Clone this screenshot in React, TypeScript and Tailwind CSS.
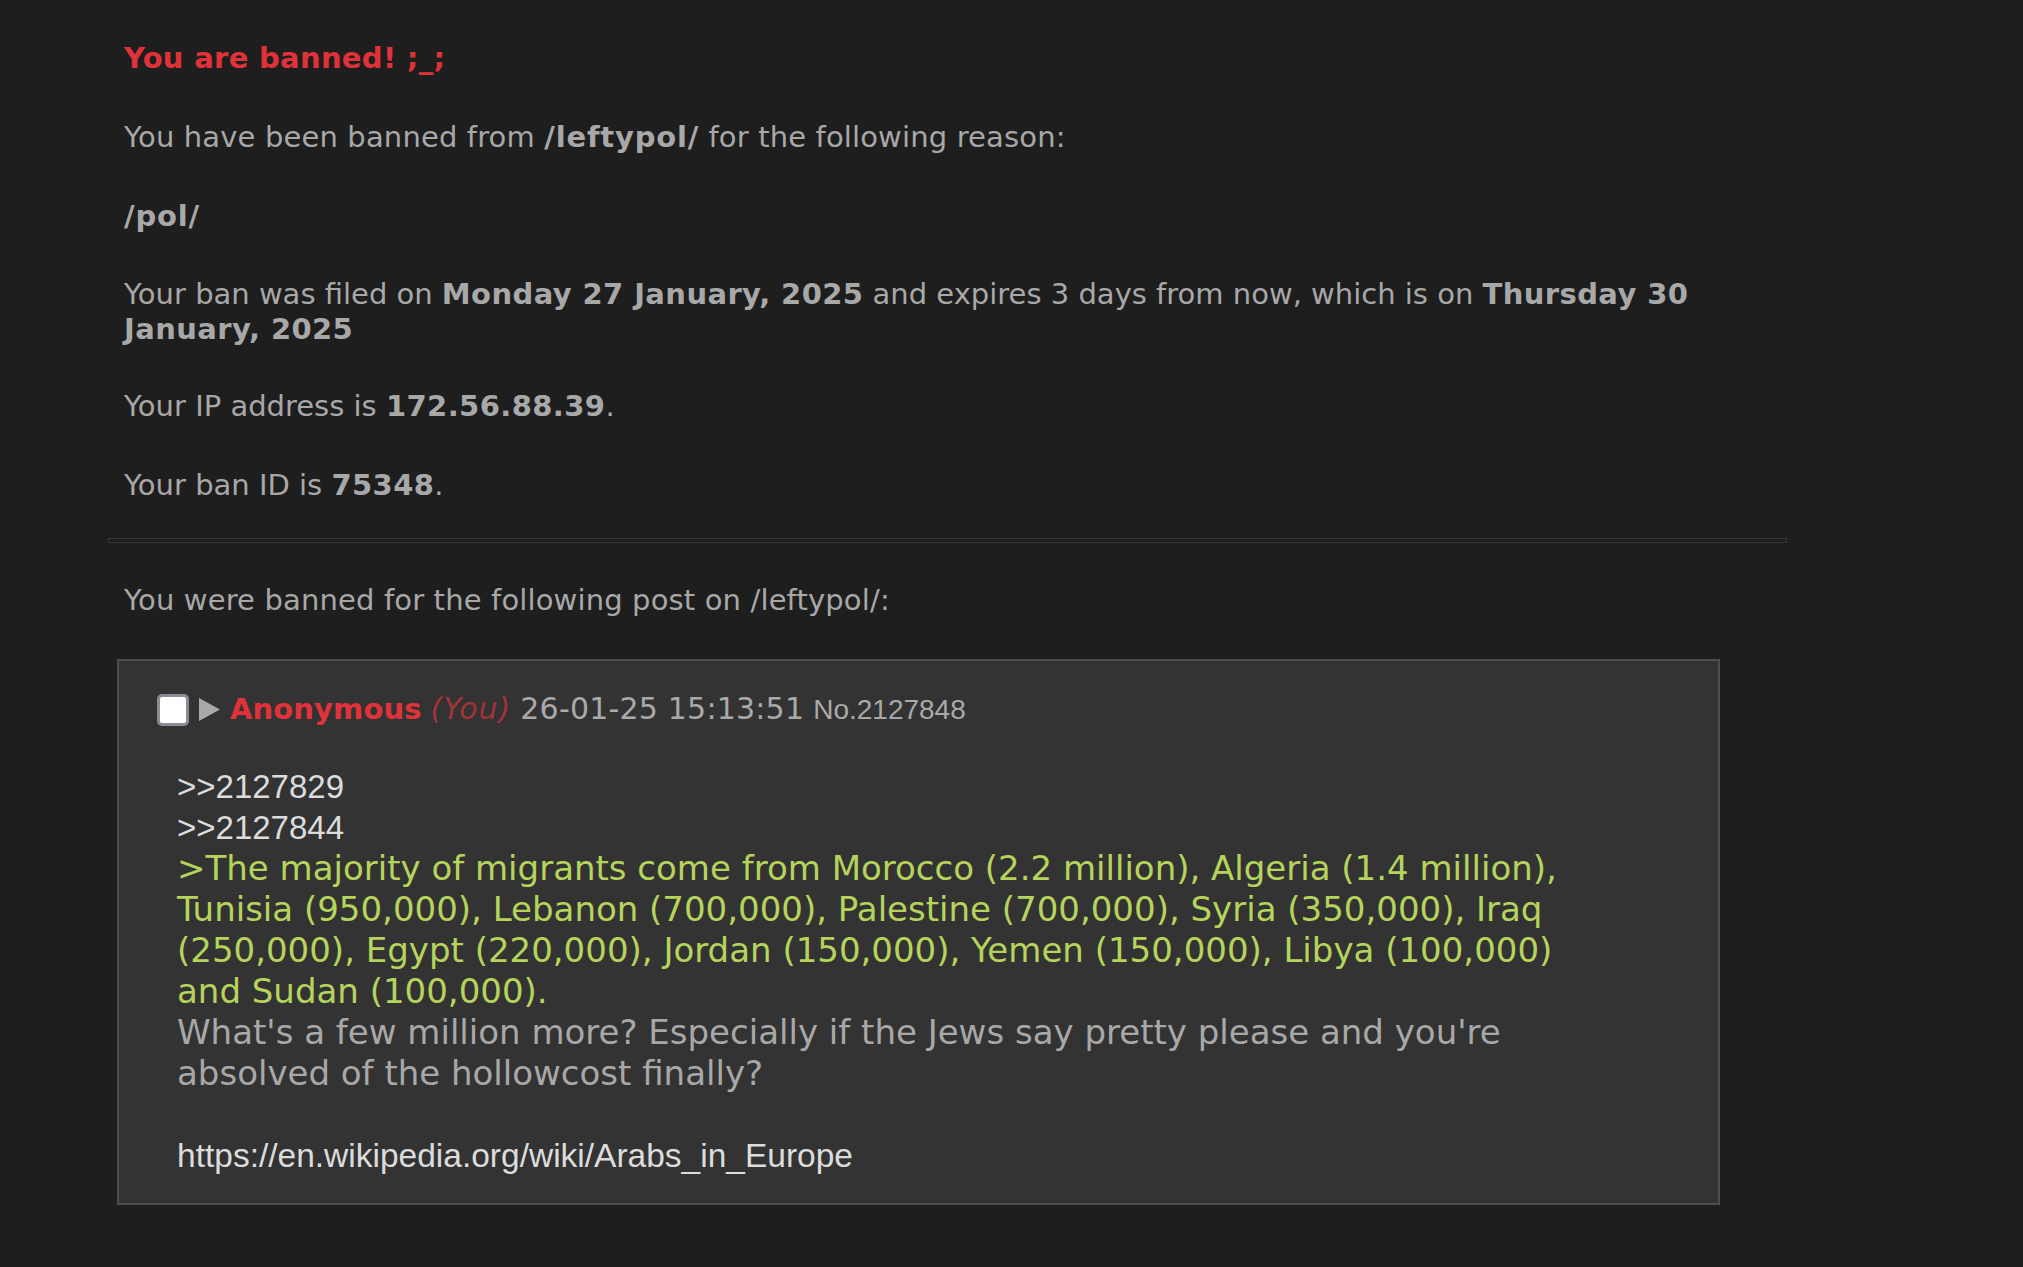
const Checkbox = () => (
  <span className="inline-block w-[32px] h-[32px] rounded-[5px] border-[3px] border-[#8b8b96] bg-white shrink-0"></span>
);

const Arrow = () => (
  <svg width="23" height="25" viewBox="0 0 23 25" className="shrink-0">
    <polygon points="1,1 22,12.5 1,24" fill="#a9a9a9" />
  </svg>
);

const App = () => {
  return (
    <div className="min-h-screen w-full bg-[#1e1e1e] font-['DejaVu_Sans',sans-serif] text-[#a8a8a8]">
      <div className="pl-[108px] pt-[41px] w-[1787px]">
        <div className="px-[16px] text-[29px] leading-[35px]">
          <h2 className="font-bold tracking-[0.3px] text-[#e0323a]">You are banned! ;_;</h2>
          <p className="mt-[44px] tracking-[0.15px]">
            You have been banned from <b className="tracking-[0.8px]">/leftypol/</b> for the following reason:
          </p>
          <p className="mt-[44px] font-bold tracking-[0.8px]">/pol/</p>
          <p className="mt-[43px]">
            Your ban was filed on <b className="tracking-[0.4px]">Monday 27 January, 2025</b> and expires 3 days from
            now, which is on <b className="tracking-[0.4px]">Thursday 30 January, 2025</b>
          </p>
          <p className="mt-[42px]">
            Your IP address is <b className="tracking-[0.4px]">172.56.88.39</b>.
          </p>
          <p className="mt-[44px]">
            Your ban ID is <b className="tracking-[0.4px]">75348</b>.
          </p>
        </div>

        <div className="mt-[35px] h-[5px] border border-[#363636]"></div>

        <p className="mt-[40px] px-[16px] text-[29px] leading-[35px] tracking-[0.15px]">
          You were banned for the following post on /leftypol/:
        </p>

        <div className="mt-[41px] ml-[9px] w-[1603px] bg-[#333333] border-2 border-[#4e4e4e] pl-[38px] pt-[30px] pb-[27px]">
          <div className="flex items-center gap-[9px] leading-[36px]">
            <Checkbox />
            <Arrow />
            <span className="flex items-baseline gap-[9px]">
              <span className="text-[29px] font-bold tracking-[0.1px] text-[#e0323a]">Anonymous</span>
              <span className="text-[30px] italic tracking-[1px] text-[#a3333a]">(You)</span>
              <span className="text-[30px] tracking-[0.2px] text-[#a9a9a9]">26-01-25 15:13:51</span>
              <span className="text-[28px] font-['Liberation_Sans',Arial,sans-serif] text-[#a9a9a9]">No.2127848</span>
            </span>
          </div>

          <div className="mt-[38px] ml-[20px] w-[1420px] text-[34px] leading-[41px]">
            <div className="text-[33px] font-['Liberation_Sans',Arial,sans-serif] text-[#dcdcdc]">&gt;&gt;2127829</div>
            <div className="text-[33px] font-['Liberation_Sans',Arial,sans-serif] text-[#dcdcdc]">&gt;&gt;2127844</div>
            <div className="text-[#b6d45c]">
              &gt;The majority of migrants come from Morocco (2.2 million), Algeria (1.4 million), Tunisia (950,000), Lebanon
              (700,000), Palestine (700,000), Syria (350,000), Iraq (250,000), Egypt (220,000), Jordan (150,000), Yemen
              (150,000), Libya (100,000) and Sudan (100,000).
            </div>
            <div className="text-[#a8a8a8]">
              What's a few million more? Especially if the Jews say pretty please and you're absolved of the hollowcost
              finally?
            </div>
            <div className="h-[41px]"></div>
            <div className="text-[33.5px] font-['Liberation_Sans',Arial,sans-serif] text-[#dcdcdc]">
              https://en.wikipedia.org/wiki/Arabs_in_Europe
            </div>
          </div>
        </div>
      </div>
    </div>
  );
};

export default App;
